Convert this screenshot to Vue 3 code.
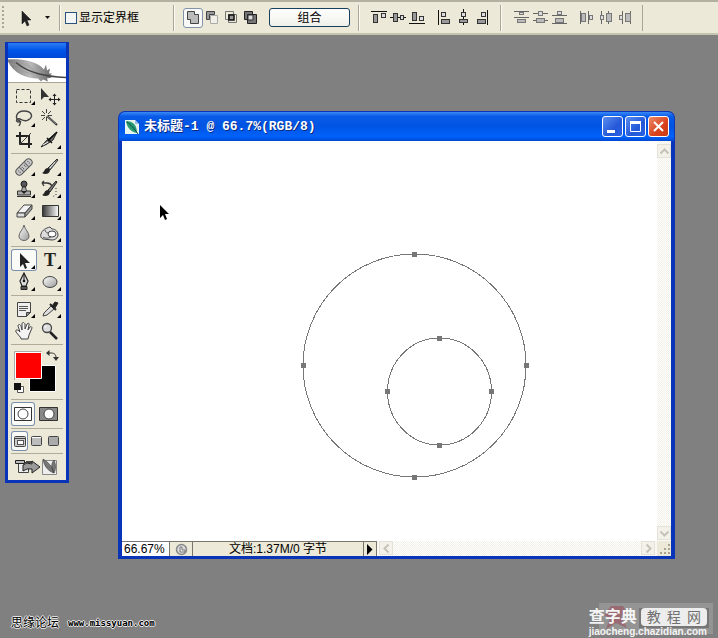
<script setup>
import { ref } from 'vue'

const showBounds = ref(false)
const zoom = ref('66.67%')
const activeTool = ref('select')

const corner = '<path d="M22 15v4h-4z" fill="#000"/>'
const arrow = '<path d="M8 3v13l3-3 2 5 2-1-2-5h4z" fill="#222" stroke="#111" stroke-width=".5"/>'

const toolGroups = [
  [
    { id: 'marquee', label: '矩形选框', more: true, art: '<path d="M3.5 3.500h14v13h-14z" fill="none" stroke="#333" stroke-dasharray="3 2"/>' },
    { id: 'move', label: '移动', art: '<path d="M2 2v12l3-3h5z" fill="#333"/><path d="M15.500 8v11M10 13.500h11" stroke="#222"/><path d="M13.500 10l2-2.500 2 2.500zM13.500 17l2 2.500 2-2.500zM12 11.500l-2.500 2 2.500 2zM19 11.500l2.500 2-2.500 2z" fill="#222"/>' },
    { id: 'lasso', label: '套索', more: true, art: '<path d="M7 13C1 11 3 3 11 3s10 6 4 9c-3 2-6 0-8-1-3-1-5 2-2 3 3 0 3-2 2 2l-1 2" fill="none" stroke="#444" stroke-width="1.400"/>' },
    { id: 'wand', label: '魔棒', art: '<path d="M8 8l10 9" stroke="#333" stroke-width="2"/><path d="M8 8l9 8" stroke="#aaa" stroke-width=".7"/><path d="M7.500 1v4M7.500 9v4M2 7.500h4M9 7.500h4M3 3l3 3M12 3l-3 3M3 12l3-3" stroke="#444"/>' },
    { id: 'crop', label: '裁剪', art: '<path d="M7 2v12h12M3 6h13v12" fill="none" stroke="#222" stroke-width="2"/><path d="M6 15L18 3" stroke="#444"/>' },
    { id: 'slice', label: '切片', more: true, art: '<path d="M2 17l5-6 4-3 7-6-4 8-6 4z" fill="#777" stroke="#222"/><path d="M8 8l5 5M9 11l9-9" stroke="#111" stroke-width="1.500"/><path d="M4 15l5-3" stroke="#eee"/>' }
  ],
  [
    { id: 'heal', label: '修复画笔', more: true, art: '<g transform="rotate(-45 11 10)"><rect x="1" y="6.500" width="20" height="7" rx="3.500" fill="#c9c9c9" stroke="#555"/><path d="M7.500 7v6M14.500 7v6" stroke="#666"/><path d="M9 9h1M12 9h1M9 11h1M12 11h1M4 9h1M4 11h1M17 9h1M17 11h1" stroke="#444"/></g>' },
    { id: 'brush', label: '画笔', more: true, art: '<path d="M18 2l-9 9 2 2 8-10z" fill="#888" stroke="#333"/><path d="M9 11c-4 0-3 4-6 5 3 2 8 1 8-3z" fill="#222"/><path d="M11 11l5-6" stroke="#eee"/>' },
    { id: 'stamp', label: '仿制图章', more: true, art: '<circle cx="11" cy="5" r="3" fill="#555" stroke="#222"/><path d="M9.500 8h3l1 4h4v4h-13v-4h4z" fill="#aaa" stroke="#333"/><path d="M8 12h6l-3 3z" fill="#222"/><path d="M4 17.500h14" stroke="#333"/>' },
    { id: 'history', label: '历史记录画笔', more: true, art: '<path d="M17 2l-8 9 2 2 7-10z" fill="#777" stroke="#222"/><path d="M9 11c-4 0-3 4-6 5 3 2 8 1 8-3z" fill="#222"/><path d="M3 4h5c3 0 4 1 5 3M3 4l2-2M3 4l2 3" fill="none" stroke="#333" stroke-width="1.300"/><path d="M17 9v7l-4 2" fill="none" stroke="#333" stroke-dasharray="1 2"/>' },
    { id: 'eraser', label: '橡皮擦', more: true, art: '<path d="M4 12l7-8h8l-7 8z" fill="#f3f3f3" stroke="#444"/><path d="M4 12h8v4H4z" fill="#ddd" stroke="#444"/><path d="M12 12l7-8v4l-7 8z" fill="#999" stroke="#444"/>' },
    { id: 'gradient', label: '渐变', more: true, art: '<path d="M3.500 4.500h16v11h-16z" fill="url(#grad-tool)" stroke="#333"/>' },
    { id: 'blur', label: '模糊', more: true, art: '<path d="M11 2c1 5 5 7 5 11 0 6-10 6-10 0 0-4 4-6 5-11z" fill="url(#soft-tool)" stroke="#666"/>' },
    { id: 'sponge', label: '海绵', more: true, art: '<path d="M2 11c1-4 5-6 9-7l2 2c4 0 6 3 6 6s-3 5-6 5l-9-1c-2-1-3-3-2-5z" fill="#ddd" stroke="#444"/><ellipse cx="13" cy="11" rx="4" ry="3" fill="#fff" stroke="#444"/><path d="M6 7c0 2 2 3 4 3M4 14c3 2 6 1 8 0" fill="none" stroke="#555"/>' }
  ],
  [
    { id: 'select', label: '路径选择', more: true, art: '<path d="M7 3v14l3-3 2 5 2-1-2-5h5z" fill="#222"/>' },
    { id: 'type', label: '文字', more: true, letter: 'T', art: '' },
    { id: 'pen', label: '钢笔', more: true, art: '<path d="M11 1l4 8-2 5H9L7 9z" fill="#ddd" stroke="#222" stroke-width="1.200"/><path d="M11 2v6" stroke="#111"/><circle cx="11" cy="9" r="1.300" fill="#111"/><path d="M8 14.500h6v3H8z" fill="#555" stroke="#222"/>' },
    { id: 'shape', label: '椭圆', more: true, art: '<ellipse cx="11" cy="10" rx="7" ry="5.500" fill="url(#soft-tool)" stroke="#444"/>' }
  ],
  [
    { id: 'note', label: '注释', more: true, art: '<path d="M4.500 3.500h13v10l-4 4h-9z" fill="#eee" stroke="#444"/><path d="M6 7.500h9M6 9.500h9M6 11.500h7" stroke="#555"/><path d="M17.500 13.500h-4v4z" fill="#888" stroke="#444"/>' },
    { id: 'eyedropper', label: '吸管', more: true, art: '<path d="M4 17l1-3 7-7 3 3-7 6z" fill="#ddd" stroke="#444"/><path d="M11 5l6 6" stroke="#222" stroke-width="2"/><path d="M13 7l3-4 3 1-3 5z" fill="#222" stroke="#222"/>' },
    { id: 'hand', label: '抓手', art: '<path d="M8 17l-5-6c-1-2 1-3 3-1l1 1-2-6c0-2 2-2 3 0l1 4V3c0-2 2-2 3 0v5l2-5c1-1 3-1 2 1l-1 5 2-3c1-1 2 0 2 1l-3 7-1 4H8z" fill="#f4f4f4" stroke="#444"/>' },
    { id: 'zoom', label: '缩放', art: '<path d="M11 11l7 7" stroke="#222" stroke-width="2.500"/><circle cx="8" cy="7" r="4.500" fill="#ddd" stroke="#444" stroke-width="1.300"/><path d="M6 7c0-2 1-2 2-2" stroke="#fff" fill="none"/>' }
  ]
]

const pathModes = [
  { label: '添加到路径区域', on: true, art: '<path d="M3.500 2.500h7v3h4v9h-8v-4h-3z" fill="#bbb" stroke="#444"/>' },
  { label: '从路径区域减去', art: '<path d="M2.500 10.500v-8h8v3h-5v5z" fill="#999" stroke="#444"/><path d="M6.500 6.500h7v8h-7z" fill="#f2f0e6" stroke="#aaa"/>' },
  { label: '交叉路径区域', art: '<path d="M2.500 2.500h8v8h-8zM5.500 5.500h8v8h-8z" fill="none" stroke="#777"/><path d="M6 6h5v5H6z" fill="#999" stroke="#111" stroke-width="1.500"/>' },
  { label: '重叠路径区域除外', art: '<path d="M2.500 2.500h8v8h-8zM5.500 5.500h9v9h-9z" fill="#777" stroke="#222"/><path d="M6 6h5v5H6z" fill="#ddd" stroke="#333"/>' }
]

const box = (x, y, w, h, c = '#999', s = '#333') =>
  `<rect x="${x}.500" y="${y}.500" width="${w}" height="${h}" fill="${c}" stroke="${s}"/>`
const line = (d, s = '#111') => `<path d="${d}" stroke="${s}" fill="none"/>`

const vAlign = [
  { label: '顶对齐', art: line('M0 2.500h16') + box(2, 5, 4, 8) + box(10, 4, 4, 4, '#ddd') },
  { label: '垂直居中对齐', art: line('M0 8.500h16') + box(3, 4, 4, 8) + box(10, 6, 3, 4, '#ddd') },
  { label: '底对齐', art: line('M0 14.500h16') + box(3, 3, 4, 8) + box(10, 7, 4, 4, '#ddd') }
]
const hAlign = [
  { label: '左对齐', art: line('M2.500 1v15') + box(5, 3, 4, 4, '#ddd') + box(5, 10, 8, 4) },
  { label: '水平居中对齐', art: line('M8.500 0v16') + box(6, 3, 4, 4, '#ddd') + box(4, 10, 8, 3) },
  { label: '右对齐', art: line('M13.500 1v15') + box(7, 3, 4, 4, '#ddd') + box(3, 10, 8, 4) }
]
const vSpread = [
  { label: '按顶分布', art: line('M1 2.500h15M1 8.500h15', '#666') + box(6, 3, 4, 2, '#ddd', '#777') + box(4, 10, 8, 3, '#bbb', '#777') },
  { label: '垂直居中分布', art: line('M1 4.500h15M1 11.500h15', '#666') + box(6, 2, 4, 4, '#ddd', '#777') + box(4, 9, 8, 4, '#bbb', '#777') },
  { label: '按底分布', art: line('M1 6.500h15M1 14.500h15', '#666') + box(6, 2, 4, 3, '#ddd', '#777') + box(4, 9, 8, 4, '#bbb', '#777') }
]
const hSpread = [
  { label: '按左分布', art: line('M2.500 2v13M10.500 2v13', '#666') + box(3, 4, 4, 8, '#bbb', '#777') + box(11, 6, 3, 4, '#ddd', '#777') },
  { label: '水平居中分布', art: line('M4.500 2v13M11.500 2v13', '#666') + box(3, 6, 3, 4, '#ddd', '#777') + box(9, 4, 5, 8, '#bbb', '#777') },
  { label: '按右分布', art: line('M6.500 2v13M14.500 2v13', '#666') + box(3, 6, 3, 4, '#ddd', '#777') + box(9, 4, 5, 8, '#bbb', '#777') }
]

const bigAnchors = [[292, 113], [404, 224], [292, 336], [181, 224]]
const smallAnchors = [[317, 197], [369, 250], [317, 304], [265, 250]]
const anchors = [...bigAnchors, ...smallAnchors]
</script>

<template>
  <div class="desktop">
    <svg class="defs" aria-hidden="true">
      <defs>
        <linearGradient id="grad-tool"><stop offset="0" stop-color="#333" /><stop offset="1" stop-color="#fff" /></linearGradient>
        <linearGradient id="soft-tool" x2="1" y2="1"><stop offset="0" stop-color="#fff" /><stop offset="1" stop-color="#999" /></linearGradient>
        <linearGradient id="feather" x2="1"><stop offset="0" stop-color="#777" /><stop offset=".5" stop-color="#bbb" /><stop offset="1" stop-color="#666" /></linearGradient>
      </defs>
    </svg>

    <header class="options">
      <span class="grip"></span>
      <button class="current" aria-label="当前工具">
        <svg width="22" height="20" v-html="arrow"></svg>
        <svg width="8" height="4"><path d="M1 0h5L3.500 3z" fill="#111" /></svg>
      </button>
      <div class="section bounds">
        <label class="check"><input v-model="showBounds" type="checkbox" /><span>显示定界框</span></label>
      </div>
      <div class="section modes">
        <button v-for="m in pathModes" :key="m.label" class="mode" :class="{ on: m.on }" :aria-label="m.label">
          <svg width="18" height="18" v-html="m.art"></svg>
        </button>
        <button class="combine">组合</button>
      </div>
      <div class="section aligns">
        <div v-for="(set, i) in [vAlign, hAlign]" :key="i" class="set">
          <button v-for="a in set" :key="a.label" :aria-label="a.label"><svg width="17" height="17" v-html="a.art"></svg></button>
        </div>
      </div>
      <div class="section aligns">
        <div v-for="(set, i) in [vSpread, hSpread]" :key="i" class="set">
          <button v-for="a in set" :key="a.label" :aria-label="a.label"><svg width="17" height="17" v-html="a.art"></svg></button>
        </div>
      </div>
      <div class="section"></div>
    </header>

    <main class="workspace">
      <aside class="toolbox">
        <div class="toolbox-title"></div>
        <svg class="feather" viewBox="0 0 58 23">
          <path d="M0 1c12-1 25 1 33 7l3 3 2-5 1 6 3-2-1 5h3l-3 3 3 1-5 1 1 3-5-2-2 2-3-3C18 20 6 15 0 3z" fill="url(#feather)" />
          <path d="M2 5c8 2 16 5 26 10M8 3c8 2 14 5 19 11M6 10c7 2 13 4 20 6M19 5l9 9" stroke="#999" fill="none" stroke-width=".7" />
          <path d="M8 4c13 11 30 14 50 15" stroke="#444" fill="none" stroke-width="1.500" />
        </svg>
        <div v-for="(group, i) in toolGroups" :key="i" class="group">
          <button
            v-for="t in group"
            :key="t.id"
            class="tool"
            :class="{ active: activeTool === t.id }"
            :aria-label="t.label"
            @click="activeTool = t.id"
          >
            <span v-if="t.letter" class="letter">{{ t.letter }}</span>
            <svg width="22" height="20" v-html="t.art + (t.more ? corner : '')"></svg>
          </button>
        </div>
        <div class="group">
          <svg class="swatches" width="52" height="50" aria-label="前景色和背景色">
            <path d="M18.500 18.500h26v26h-26z" fill="#000" stroke="#fff" />
            <path d="M4.500 5.500h26v26h-26z" fill="#f00" stroke="#fff" />
            <path d="M3.500 33v-28.500h27" fill="none" stroke="#aaa" />
            <path d="M37 6h3c4 0 5 2 5 5" fill="none" stroke="#333" />
            <path d="M35 6l3.500-3v6zM42 10h6l-3 4z" fill="#333" />
            <path d="M6.500 39.500h6v6h-6z" fill="#fff" stroke="#555" />
            <path d="M3 36h7v7H3z" fill="#111" />
          </svg>
        </div>
        <div class="group masks">
          <button class="mask active" aria-label="标准模式编辑">
            <svg width="20" height="18"><path d="M1.500 2.500h17v13h-17z" fill="#fff" stroke="#333" /><circle cx="10" cy="9" r="5" fill="#fff" stroke="#444" /></svg>
          </button>
          <button class="mask" aria-label="快速蒙版模式编辑">
            <svg width="20" height="18"><path d="M.5 2.500h18v13H.5z" fill="#888" stroke="#333" /><circle cx="10" cy="9" r="5" fill="#fff" stroke="#444" /></svg>
          </button>
        </div>
        <div class="group screens">
          <button class="screen active" aria-label="标准屏幕模式">
            <svg width="14" height="14"><rect x="1.500" y="2.500" width="11" height="10" rx="1" fill="#ccc" stroke="#444" /><path d="M2 4.500h10" stroke="#444" /><rect x="4.500" y="6.500" width="6" height="4" fill="#fff" stroke="#555" /></svg>
          </button>
          <button class="screen" aria-label="带菜单栏的全屏模式">
            <svg width="14" height="14"><rect x="1.500" y="2.500" width="10" height="9" rx="1" fill="#bbb" stroke="#444" /><path d="M2 3.500h9" stroke="#fff" /></svg>
          </button>
          <button class="screen" aria-label="全屏模式">
            <svg width="14" height="14"><rect x="1.500" y="2.500" width="10" height="9" rx="1" fill="#aaa" stroke="#444" /></svg>
          </button>
        </div>
        <div class="group">
          <button class="jump" aria-label="转到图像编辑软件">
            <svg width="46" height="20">
              <path d="M4.500 5.500h10v10h-10z" fill="#eee" stroke="#444" />
              <path d="M1.500 3.500h9v3h-9z" fill="#bbb" stroke="#222" />
              <path d="M12 4h6v2h-6z" fill="#444" />
              <path d="M9 8l4-2 5 1V4l8 6-8 6v-4h-5l-4 2z" fill="#999" stroke="#222" />
              <path d="M28.500 3.500h14v14h-14z" fill="#eee" stroke="#888" />
              <path d="M29 2c5 3 9 7 11 14-6-2-10-7-11-14zM40 3c2 5 2 9 0 13-3-5-3-9 0-13z" fill="#777" stroke="#444" stroke-width=".7" />
            </svg>
          </button>
        </div>
      </aside>

      <section class="document">
        <div class="title">
          <svg width="16" height="16">
            <path d="M1 1h10l4 4v10H1z" fill="#e8f4f0" />
            <path d="M2 2c7 0 11 4 11 12C7 13 3 9 2 2z" fill="#2a9a70" />
            <path d="M3 3c4 3 7 6 11 12" fill="none" stroke="#064a50" /><path d="M11 1l4 4h-4z" fill="#9bd" />
          </svg>
          <h1>未标题-1 @ 66.7%(RGB/8)</h1>
          <button class="win" aria-label="最小化"><svg width="19" height="19"><path d="M4 13h8v3H4z" fill="#fff" /></svg></button>
          <button class="win" aria-label="最大化"><svg width="19" height="19"><path d="M4.500 5v9.500h10V5" fill="none" stroke="#fff" /><path d="M4 4h11v3H4z" fill="#fff" /></svg></button>
          <button class="win close" aria-label="关闭"><svg width="19" height="19"><path d="M5 5l9 9M14 5l-9 9" stroke="#fff" stroke-width="2" /></svg></button>
        </div>
        <div class="body">
          <svg class="art" viewBox="0 0 535 400" aria-label="两个圆形路径">
            <g fill="none" stroke="#777" shape-rendering="crispEdges">
              <circle cx="292.500" cy="224.500" r="111.500" />
              <ellipse cx="317.500" cy="250.500" rx="52" ry="53.500" />
            </g>
            <rect v-for="(a, i) in anchors" :key="i" :x="a[0] - 2" :y="a[1] - 2" width="5" height="5" fill="#777" />
            <path d="M38 64v13l3-3 2 5 2-1-2-5h4z" fill="#000" />
          </svg>
          <div class="scroll vertical">
            <button aria-label="向上滚动"><svg width="11" height="11"><path d="M1.500 7.500l4-4 4 4" fill="none" stroke="#c5c3b8" stroke-width="2" /></svg></button>
            <button aria-label="向下滚动"><svg width="11" height="11"><path d="M1.500 3.500l4 4 4-4" fill="none" stroke="#c5c3b8" stroke-width="2" /></svg></button>
          </div>
        </div>
        <footer class="status">
          <input v-model="zoom" class="zoom" aria-label="缩放比例" />
          <button class="cell version" aria-label="版本">
            <svg width="13" height="13"><circle cx="6.500" cy="6.500" r="5" fill="#ddd" stroke="#888" stroke-width="1.500" /><path d="M5 9V4h2v3h3v2z" fill="#eee" stroke="#777" /></svg>
          </button>
          <span class="cell info">文档:1.37M/0 字节</span>
          <button class="cell next" aria-label="状态信息"><svg width="6" height="11"><path d="M0 0l5.500 5.500L0 11z" fill="#000" /></svg></button>
          <div class="scroll horizontal">
            <button aria-label="向左滚动"><svg width="11" height="11"><path d="M7.500 1.500l-4 4 4 4" fill="none" stroke="#c5c3b8" stroke-width="2" /></svg></button>
            <button aria-label="向右滚动"><svg width="11" height="11"><path d="M3.500 1.500l4 4-4 4" fill="none" stroke="#c5c3b8" stroke-width="2" /></svg></button>
          </div>
          <svg class="resize" width="14" height="14"><path d="M11 3h2v2h-2zM7 7h2v2H7zM11 7h2v2h-2zM3 11h2v2H3zM7 11h2v2H7zM11 11h2v2h-2z" fill="#aaa48f" /></svg>
        </footer>
      </section>
    </main>

    <div class="credit"><span>思缘论坛</span><a href="#">www.missyuan.com</a></div>
    <div class="source">
      <svg class="emblem" viewBox="0 0 114 31">
        <path d="M0 0h114v31H0z" fill="#949494" />
        <path d="M12 3h12l4 7-6 3 6 12-11-5-10 6 4-11-6-3z" fill="#9a5f68" opacity=".8" />
        <path d="M40 5h70v20H40z" fill="#777" />
      </svg>
      <div class="brand">
        <strong>查字典</strong>
        <span class="pill"><span v-for="c in '教程网'" :key="c">{{ c }}</span></span>
      </div>
      <a href="#">jiaocheng.chazidian.com</a>
    </div>
  </div>
</template>

<style>
body {
  margin: 0;
  background: #808080;
}
</style>

<style scoped>
.desktop {
  position: relative;
  min-height: 100vh;
  overflow: hidden;
  display: flex;
  flex-direction: column;
  background: #808080;
  color: #000;
  font: 12px/14px "Liberation Sans", "Noto Sans CJK SC", sans-serif;
}
.defs {
  position: absolute;
  width: 0;
  height: 0;
}
svg {
  display: block;
  flex: none;
}
button {
  display: flex;
  align-items: center;
  justify-content: center;
  margin: 0;
  padding: 0;
  border: 0;
  background: none;
  color: inherit;
  font: inherit;
}
.options {
  display: flex;
  align-items: center;
  height: 31px;
  border-top: 2px solid #b4b0a2;
  border-bottom: 2px solid #c5c4ae;
  background: #ece9d8;
}
.grip {
  width: 2px;
  height: 24px;
  margin: 0 7px 0 2px;
  background: repeating-linear-gradient(#aaa695 0 2px, #ece9d8 2px 4px);
}
.current {
  width: 48px;
  gap: 8px;
  padding-right: 4px;
}
.section {
  display: flex;
  align-items: center;
  height: 26px;
  border-left: 1px solid #aaa695;
  box-shadow: inset 1px 0 #fbfaf4;
}
.bounds {
  width: 113px;
}
.check {
  display: flex;
  align-items: center;
  gap: 2px;
  padding-left: 5px;
}
.check input {
  appearance: none;
  width: 12px;
  height: 12px;
  margin: 0;
  border: 1px solid #29527d;
  background: #f4f6f5;
}
.modes {
  box-sizing: border-box;
  width: 185px;
  padding-left: 9px;
}
.mode {
  width: 19px;
  height: 20px;
}
.mode.on {
  box-sizing: border-box;
  width: 20px;
  border: 1px solid #8493aa;
  border-radius: 3px;
  background: #f8f8f6;
}
.combine {
  box-sizing: border-box;
  width: 81px;
  height: 19px;
  margin-left: 9px;
  border: 1px solid #17405f;
  border-radius: 3px;
  background: linear-gradient(#fff, #f0f0ea);
}
.aligns {
  box-sizing: border-box;
  width: 142px;
  padding-left: 12px;
  gap: 10px;
}
.set {
  display: flex;
  gap: 2px;
}
.workspace {
  flex: 1;
}
.toolbox {
  position: absolute;
  left: 5px;
  top: 42px;
  width: 58px;
  border: solid #0a34b8;
  border-width: 1px 3px 3px;
  background: #ece9d8;
}
.toolbox-title {
  height: 15px;
  background: linear-gradient(#2b7df2, #0054e8 50%, #0048d8);
}
.feather {
  width: 100%;
  height: 24px;
  border-bottom: 1px solid #aaa695;
  background: #fff;
}
.group {
  display: flex;
  flex-wrap: wrap;
  margin: 0 3px;
  padding: 2px 0;
}
.group + .group {
  border-top: 1px solid #b0ac9b;
}
.tool {
  position: relative;
  width: 26px;
  height: 22px;
}
.active {
  border-radius: 3px;
  background: #fafaf7;
  box-shadow: inset 0 0 0 1px #7890ac;
}
.letter {
  position: absolute;
  inset: 0;
  color: #222;
  font: bold 18px/22px "Liberation Serif", serif;
  text-align: center;
}
.mask {
  width: 24px;
  height: 24px;
}
.masks {
  gap: 2px;
}
.screen {
  width: 17px;
  height: 20px;
}
.jump {
  height: 22px;
  padding-left: 3px;
}
.document {
  position: absolute;
  left: 118px;
  top: 111px;
  width: 549px;
  border: solid #0a34b8;
  border-width: 1px 4px 3px;
  border-radius: 7px 7px 0 0;
  background: #0a34b8;
}
.title {
  display: flex;
  align-items: center;
  gap: 2px;
  height: 29px;
  margin: 0 -3px;
  padding: 0 5px;
  border-radius: 6px 6px 0 0;
  background: linear-gradient(#3b8af5, #0a5ae8 15%, #0054e3 50%, #0062fb 85%, #0048d0);
}
h1 {
  flex: 1;
  margin: 0;
  padding-left: 2px;
  color: #fff;
  font: bold 13px/16px "Liberation Mono", "Noto Sans CJK SC", monospace;
  text-shadow: 1px 1px #0a2a80;
}
.win {
  width: 21px;
  height: 21px;
  border: 1px solid #fff;
  border-radius: 3px;
  background: linear-gradient(135deg, #5b8df0, #2458d8 60%, #2a62e4);
}
.close {
  background: linear-gradient(135deg, #ee8a68, #d8431c 60%, #c83a14);
}
.body {
  display: flex;
  background: #fff;
}
.art {
  flex: 1;
  min-width: 0;
}
.scroll {
  display: flex;
  justify-content: space-between;
  background: repeating-conic-gradient(#f2f1e8 0 25%, #fff 0 50%) 0 0 / 2px 2px;
}
.scroll button {
  width: 14px;
  height: 14px;
  background: #f3f2ea;
  box-shadow: inset 0 0 0 1px #e4e2d6;
}
.vertical {
  flex-direction: column;
  width: 14px;
  padding: 3px 0 1px;
}
.status {
  display: flex;
  height: 15px;
  background: #ece9d8;
}
.zoom {
  box-sizing: border-box;
  width: 47px;
  margin: 0;
  padding: 0 2px;
  border: 0;
  border-top: 1px solid #777;
  border-radius: 0;
  background: #fff;
  font: 12px/14px "Liberation Sans", sans-serif;
}
.cell {
  box-sizing: border-box;
  border-top: 1px solid #77756c;
  border-left: 1px solid #77756c;
}
.version {
  width: 23px;
}
.info {
  width: 171px;
  text-align: center;
  white-space: nowrap;
}
.next {
  width: 14px;
  border-right: 1px solid #77756c;
}
.horizontal {
  flex: 1;
  padding: 0 2px;
}
.credit {
  position: absolute;
  left: 11px;
  bottom: 8px;
  display: flex;
  align-items: center;
  gap: 9px;
  text-shadow: 1px 0 #eee, -1px 0 #eee, 0 1px #eee, 0 -1px #eee;
}
.credit a {
  color: #000;
  font: bold 9px/14px "DejaVu Sans Mono", monospace;
  text-decoration: none;
}
.source {
  position: absolute;
  right: 11px;
  bottom: 0;
  display: flex;
  flex-direction: column;
  color: #f4f4f4;
}
.emblem {
  position: absolute;
  right: -6px;
  bottom: 4px;
  width: 114px;
}
.brand {
  position: relative;
  display: flex;
  align-items: center;
  gap: 4px;
}
.brand strong {
  font-size: 16px;
  line-height: 18px;
}
.pill {
  flex: 1;
  display: flex;
  justify-content: space-evenly;
  border-radius: 4px;
  background: #ededed;
  color: #707070;
  font-size: 14px;
  line-height: 18px;
}
.source a {
  position: relative;
  color: #f4f4f4;
  font: bold 10px/12px "Liberation Sans", sans-serif;
  text-decoration: none;
}
</style>
